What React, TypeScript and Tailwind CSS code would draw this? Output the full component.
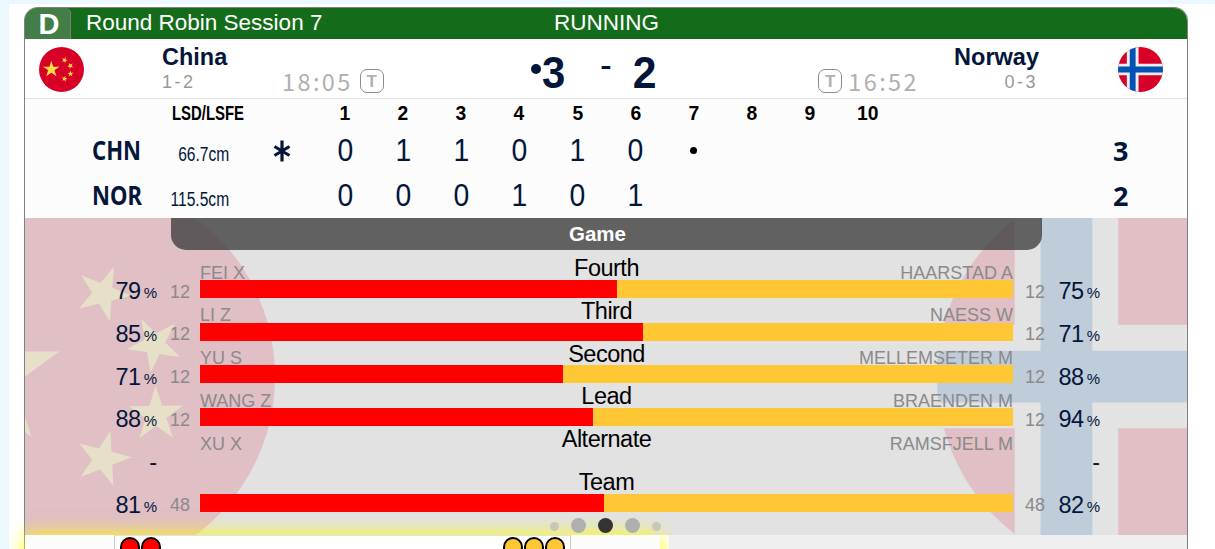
interface Team {
  code: string;
  lsd: string;
  hammer: boolean;
  ends: string[];
  total: number;
}

interface Stat {
  position: string;
  left: string;
  right: string;
  leftPct?: number;
  rightPct?: number;
  shots?: number;
}

const teams: Team[] = [
  {
    code: "CHN",
    lsd: "66.7cm",
    hammer: true,
    ends: ["0", "1", "1", "0", "1", "0", "•", "", "", ""],
    total: 3,
  },
  {
    code: "NOR",
    lsd: "115.5cm",
    hammer: false,
    ends: ["0", "0", "0", "1", "0", "1", "", "", "", ""],
    total: 2,
  },
];

const stats: Stat[] = [
  { position: "Fourth", left: "FEI X", right: "HAARSTAD A", leftPct: 79, rightPct: 75, shots: 12 },
  { position: "Third", left: "LI Z", right: "NAESS W", leftPct: 85, rightPct: 71, shots: 12 },
  { position: "Second", left: "YU S", right: "MELLEMSETER M", leftPct: 71, rightPct: 88, shots: 12 },
  { position: "Lead", left: "WANG Z", right: "BRAENDEN M", leftPct: 88, rightPct: 94, shots: 12 },
  { position: "Alternate", left: "XU X", right: "RAMSFJELL M" },
  { position: "Team", left: "", right: "", leftPct: 81, rightPct: 82, shots: 48 },
];

function ChinaFlag({ className }: { className: string }) {
  return (
    <svg viewBox="0 0 512 512" className={className}>
      <circle cx="256" cy="256" r="256" fill="#d80027" />
      <path
        fill="#ffda44"
        d="m140.1 155.8 22.1 68h71.5l-57.8 42.1 22.1 68-57.9-42-57.9 42 22.2-68-57.9-42.1H118zm163.4 240.7-16.9-20.8-25 9.7 14.5-22.5-16.9-20.9 25.9 6.9 14.6-22.5 1.4 26.8 26 6.9-25.1 9.6zm33.6-61 8-25.6-21.9-15.5 26.8-.4 7.9-25.6 8.7 25.4 26.8-.3-21.5 16 8.6 25.4-21.9-15.5zm45.3-147.6L370.6 212l19.2 18.7-26.5-3.8-11.8 24-4.6-26.4-26.6-3.8 23.8-12.5-4.6-26.5 19.2 18.7zm-78.2-73-2 26.7 24.9 10.1-26.1 6.4-1.9 26.8-14.1-22.8-26.1 6.4 17.3-20.5-14.2-22.7 24.9 10.1z"
      />
    </svg>
  );
}

function NorwayFlag({ className, id }: { className: string; id: string }) {
  return (
    <svg viewBox="0 0 512 512" className={className}>
      <clipPath id={id}>
        <circle cx="256" cy="256" r="256" />
      </clipPath>
      <g clipPath={`url(#${id})`}>
        <path fill="#d80027" d="M0 0h512v512H0z" />
        <path fill="#eee" d="M100.2 0v189.3H0v133.5h100.2V512h133.5V322.8H512V189.3H233.7V0z" />
        <path fill="#0052b4" d="M133.6 0v222.7H0v66.7h133.6V512h66.7V289.4H512v-66.7H200.3V0z" />
      </g>
    </svg>
  );
}

function Timeout() {
  return (
    <span className="flex size-[24px] items-center justify-center rounded-[7px] border border-[#8c8c8c] text-[17px] leading-none font-bold text-[#b0b0b0]">
      T
    </span>
  );
}

function Clock({ time }: { time: string }) {
  return (
    <span className="font-['Noto_Sans_CJK_JP',sans-serif] text-[23.5px] leading-[24px] tracking-[2.4px] text-[#b0b0b0]">
      {time}
    </span>
  );
}

function Percent({ value }: { value?: number }) {
  if (value === undefined) {
    return <span>-</span>;
  }
  return (
    <>
      <span className="tracking-[-0.5px]">{value}</span>
      <span className="relative -top-px ml-[3px] text-[15px]">%</span>
    </>
  );
}

function Stone({ className }: { className: string }) {
  return <span className={`size-[20px] rounded-full border-2 border-black ${className}`} />;
}

function TeamRow({ team }: { team: Team }) {
  return (
    <div className="flex h-[45px] items-center text-[#03163a]">
      <div className="w-[146px] pl-[67px] font-['Noto_Sans',sans-serif] text-[26px] leading-[45px] font-bold">
        <span className="inline-block origin-left scale-x-[0.85]">{team.code}</span>
      </div>
      <div className="flex w-[58px] justify-end pt-[7px] text-[20.5px] leading-none">
        <span className="origin-right scale-x-[0.76]">{team.lsd}</span>
      </div>
      <div className="flex w-[87px] pl-[44px]">
        {team.hammer && (
          <svg viewBox="0 0 18 22" className="h-[22px] w-[18px]" stroke="#03163a" strokeWidth="3.2">
            <path d="M9 0.5v21M1.5 6.5l15 9M16.5 6.5l-15 9" />
          </svg>
        )}
      </div>
      {team.ends.map((end, i) => (
        <div key={i} className="w-[58.1px] shrink-0 text-center text-[30.5px] leading-none">
          {end === "•" ? (
            <span className="mx-auto block size-[7px] rounded-full bg-black" />
          ) : (
            <span className="inline-block scale-x-[0.93]">{end}</span>
          )}
        </div>
      ))}
      <div className="pl-[216px] font-['Noto_Sans',sans-serif] text-[27px] leading-[45px] font-bold">{team.total}</div>
    </div>
  );
}

function StatRow({ stat }: { stat: Stat }) {
  const { leftPct, rightPct, shots } = stat;
  return (
    <div className="flex h-[42.75px]">
      <div className="flex w-[132px] items-baseline justify-end pt-[24px] text-[23.5px] leading-[24px] text-[#03163a]">
        <Percent value={leftPct} />
      </div>
      <div className="w-[33px] pt-[24.5px] text-right text-[18px] leading-[24px] text-[#8a8a8a]">{shots}</div>
      <div className="ml-[10px] w-[813px]">
        <div className="grid h-[24.75px] grid-cols-3 text-[18px] leading-[24px] text-[#8a8a8a]">
          <div className="pt-[5.5px]">{stat.left}</div>
          <div className="pt-px text-center text-[23.5px] tracking-[-0.5px] text-black">{stat.position}</div>
          <div className="pt-[5.5px] text-right">{stat.right}</div>
        </div>
        {leftPct !== undefined && rightPct !== undefined && (
          <div className="flex h-[18px] bg-[#ffc733]">
            <div className="bg-[#ff0000]" style={{ width: `${(leftPct / (leftPct + rightPct)) * 100}%` }} />
          </div>
        )}
      </div>
      <div className="w-[32px] pt-[24.5px] text-right text-[18px] leading-[24px] text-[#8a8a8a]">{shots}</div>
      <div className="flex w-[55px] items-baseline justify-end pt-[24px] text-[23.5px] leading-[24px] text-[#03163a]">
        <Percent value={rightPct} />
      </div>
    </div>
  );
}

export default function App() {
  return (
    <div className="h-[549px] w-[1215px] overflow-hidden bg-[#ebf8ff] pt-[4px] pl-[9px] font-['Liberation_Sans',Arial,sans-serif]">
      <div className="h-full overflow-hidden bg-white pt-[3px] pl-[15px]">
        <div className="relative w-[1164px] rounded-t-[14px] border border-b-0 border-[#808080]">
          <div className="relative flex h-[31px] items-center rounded-t-[13px] bg-[#146c1a] text-[22.5px] leading-none text-white">
            <div className="flex h-full w-[46px] items-center justify-center rounded-tl-[13px] rounded-tr-[5px] border-r border-[#7d7d7d] bg-[#437e48] pt-[2px] pl-[3px] text-[29px] font-bold">
              D
            </div>
            <span className="ml-[15px] flex-1">Round Robin Session 7</span>
            <span className="absolute inset-x-0 pl-px text-center">RUNNING</span>
          </div>

          <div className="flex h-[60px] border-b border-[#e2e2e2] bg-white">
            <ChinaFlag className="mt-[8px] ml-[14px] size-[45px]" />
            <div className="ml-[78px] w-[120px] pt-[6px]">
              <div className="text-[23.5px] leading-[24px] font-bold text-[#03163a]">China</div>
              <div className="text-[18px] leading-[26px] tracking-[2.5px] text-[#999]">1-2</div>
            </div>
            <div className="flex w-[249px] gap-[7px] pt-[30px]">
              <Clock time="18:05" />
              <Timeout />
            </div>
            <div className="flex text-[45px] leading-[68px] font-bold text-[#03163a]">
              <span className="mt-[25px] size-[10px] rounded-full bg-[#03163a]" />
              <span className="scale-x-[0.93]">3</span>
              <span className="w-[66px] pl-[14px] text-center text-[34px] leading-[53px]">
                <span className="inline-block scale-y-[0.75]">-</span>
              </span>
              <span className="scale-x-[0.95]">2</span>
            </div>
            <div className="ml-auto flex gap-[6px] pt-[30px]">
              <Timeout />
              <Clock time="16:52" />
            </div>
            <div className="w-[119px] pt-[6px] text-right">
              <div className="relative left-px text-[23.5px] leading-[24px] font-bold text-[#03163a]">Norway</div>
              <div className="text-[18px] leading-[26px] tracking-[2.5px] text-[#999]">0-3</div>
            </div>
            <NorwayFlag id="no-badge" className="mt-[8px] mr-[24px] ml-[80px] size-[45px]" />
          </div>

          <div className="h-[119px] bg-[#fcfcfc]">
            <div className="flex h-[29px] items-center pb-[3px] text-[21px] leading-none font-bold text-black">
              <div className="ml-[147px] w-[144px]">
                <span className="inline-block origin-left scale-x-[0.71]">LSD/LSFE</span>
              </div>
              {teams[0].ends.map((_, i) => (
                <div key={i} className="w-[58.1px] text-center">
                  <span className="inline-block scale-x-[0.92]">{i + 1}</span>
                </div>
              ))}
            </div>
            {teams.map((team) => (
              <TeamRow key={team.code} team={team} />
            ))}
          </div>

          <div className="relative h-[317px] overflow-hidden bg-[#e2e2e2]">
            <ChinaFlag className="absolute top-[-40px] left-[-147px] size-[397px] opacity-15" />
            <NorwayFlag id="no-backdrop" className="absolute top-[-40px] left-[912px] size-[397px] opacity-15" />
            <div className="relative">
              <div className="ml-[146px] h-[32px] w-[871px] rounded-b-[15px] bg-[#414141]/80 pr-[18px] text-center text-[20.5px] leading-[32px] font-bold text-white">
                Game
              </div>
              <div className="pt-[5.1px]">
                {stats.map((stat) => (
                  <StatRow key={stat.position} stat={stat} />
                ))}
              </div>
            </div>
          </div>

          <div className="relative flex h-[14px]">
            <div className="flex h-[60px] w-[635px] shrink-0 bg-[#fcfcfc] shadow-[0_0_18px_0_#ffff00]">
              <div className="w-[89px]" />
              <div className="flex w-[457px] justify-between border border-[#ccc] border-t-[#e2e2e2] bg-white pt-px pr-[5px] pl-[5px]">
                <div className="flex gap-px">
                  <Stone className="bg-[#ff0000]" />
                  <Stone className="bg-[#ff0000]" />
                </div>
                <div className="flex gap-px">
                  <Stone className="bg-[#ffc733]" />
                  <Stone className="bg-[#ffc733]" />
                  <Stone className="bg-[#ffc733]" />
                </div>
              </div>
            </div>
            <div className="relative ml-[9px] flex-1 bg-[#efefef]" />
          </div>

          {/* carousel dots, drawn above the glow of the stone panel */}
          <div className="absolute inset-x-0 bottom-[16px] flex h-[15px] items-center justify-center pr-px">
            <span className="mt-px mr-[12px] size-[9px] rounded-full bg-[#c8c8b8]" />
            <span className="size-[15px] rounded-full bg-[#afafaf]" />
            <span className="mx-[12px] size-[15px] rounded-full bg-[#333]" />
            <span className="size-[15px] rounded-full bg-[#afafaf]" />
            <span className="mt-px ml-[12px] size-[9px] rounded-full bg-[#c8c8b8]" />
          </div>
        </div>
      </div>
    </div>
  );
}
